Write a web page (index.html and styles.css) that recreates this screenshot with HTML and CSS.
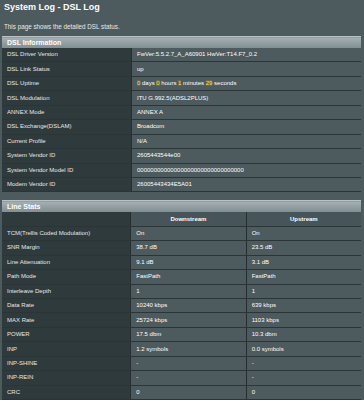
FILE: index.html
```html
<!DOCTYPE html>
<html lang="en">

<head>
    <meta charset="UTF-8">
    <title>System Log - DSL Log</title>
    <link rel="stylesheet" href="styles.css">
</head>

<body>
    <h1 class="page-title">System Log - DSL Log</h1>
    <p class="intro">This page shows the detailed DSL status.</p>

    <table class="info-table">
        <thead>
            <tr><th colspan="2" class="section-head">DSL Information</th></tr>
        </thead>
        <tbody>
            <tr><th>DSL Driver Version</th><td>FwVer:5.5.2.7_A_A60901 HwVer:T14.F7_0.2</td></tr>
            <tr><th>DSL Link Status</th><td>up</td></tr>
            <tr><th>DSL Uptime</th><td><span class="num">0</span> days <span class="num">0</span> hours <span class="num">1</span> minutes <span class="num">29</span> seconds</td></tr>
            <tr><th>DSL Modulation</th><td>ITU G.992.5(ADSL2PLUS)</td></tr>
            <tr><th>ANNEX Mode</th><td>ANNEX A</td></tr>
            <tr><th>DSL Exchange(DSLAM)</th><td>Broadcom</td></tr>
            <tr><th>Current Profile</th><td>N/A</td></tr>
            <tr><th>System Vendor ID</th><td>2605443544e00</td></tr>
            <tr><th>System Vendor Model ID</th><td>00000000000000000000000000000000</td></tr>
            <tr><th>Modem Vendor ID</th><td>26005443434E5A01</td></tr>
        </tbody>
    </table>

    <table class="info-table stats">
        <thead>
            <tr><th colspan="3" class="section-head">Line Stats</th></tr>
            <tr class="col-head"><th></th><td>Downstream</td><td>Upstream</td></tr>
        </thead>
        <tbody>
            <tr><th>TCM(Trellis Coded Modulation)</th><td>On</td><td>On</td></tr>
            <tr><th>SNR Margin</th><td>38.7 dB</td><td>23.5 dB</td></tr>
            <tr><th>Line Attenuation</th><td>9.1 dB</td><td>3.1 dB</td></tr>
            <tr><th>Path Mode</th><td>FastPath</td><td>FastPath</td></tr>
            <tr><th>Interleave Depth</th><td>1</td><td>1</td></tr>
            <tr><th>Data Rate</th><td>10240 kbps</td><td>639 kbps</td></tr>
            <tr><th>MAX Rate</th><td>25724 kbps</td><td>1103 kbps</td></tr>
            <tr><th>POWER</th><td>17.5 dbm</td><td>10.3 dbm</td></tr>
            <tr><th>INP</th><td>1.2 symbols</td><td>0.0 symbols</td></tr>
            <tr><th>INP-SHINE</th><td>-</td><td>-</td></tr>
            <tr><th>INP-REIN</th><td>-</td><td>-</td></tr>
            <tr><th>CRC</th><td>0</td><td>0</td></tr>
        </tbody>
    </table>
</body>

</html>
```

FILE: styles.css
```css
body {
    font-family: "Liberation Sans", Arial, sans-serif;
    margin: 0;
    padding: 0 3px 0 2px;
    background-color: #4d5a5e;
    color: #ffffff;
    font-size: 6px;
}

.page-title {
    font-size: 9px;
    font-weight: bold;
    margin: 0;
    padding: 1px 0 0 2px;
    height: 14px;
    line-height: 13px;
}

.intro {
    margin: 0;
    padding: 8px 0 0 2px;
    height: 13px;
    line-height: 8px;
    font-size: 6.3px;
    color: #e8eaea;
}

.info-table {
    width: 100%;
    border-collapse: collapse;
    margin-bottom: 8px;
}

.section-head {
    text-align: left;
    font-weight: bold;
    font-size: 7px;
    height: 11px;
    padding: 0 0 0 5px;
    line-height: 11px;
    background: linear-gradient(#a5b1b4, #7f8c90);
    border-top: 1px solid #b9c3c5;
    color: #ffffff;
}

.info-table tbody th,
.info-table tbody td,
.col-head th,
.col-head td {
    height: 13.45px;
    padding: 0 0 0 5px;
    border-bottom: 1px solid #2b3436;
    line-height: 13px;
    font-weight: normal;
    text-align: left;
}

.info-table tbody th,
.col-head th {
    width: 124px;
    background-color: #2f3a3d;
    color: #e6e8e8;
    border-right: 1px solid #262e31;
}

.info-table tbody td {
    background-color: #4d5a5e;
}

.stats td {
    width: 110px;
}

.stats td + td {
    border-left: 1px solid #262e31;
}

.col-head td {
    text-align: center;
    font-weight: bold;
    background-color: #47545a;
    padding: 0;
}

.num {
    color: #f5e04a;
    background-color: #6b6a44;
}
```
